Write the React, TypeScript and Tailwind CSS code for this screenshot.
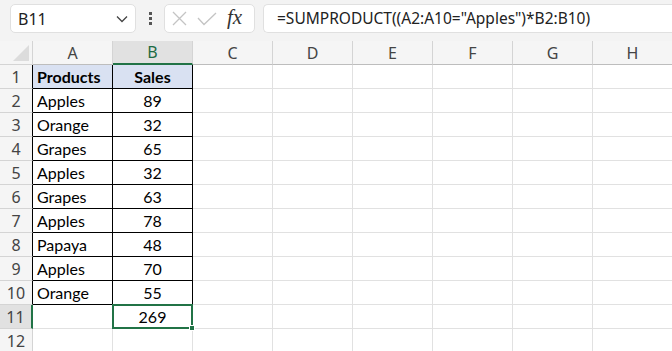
import React from 'react';

const cols = ['A', 'B', 'C', 'D', 'E', 'F', 'G', 'H'];

const data: [string, string][] = [
  ['Products', 'Sales'],
  ['Apples', '89'],
  ['Orange', '32'],
  ['Grapes', '65'],
  ['Apples', '32'],
  ['Grapes', '63'],
  ['Apples', '78'],
  ['Papaya', '48'],
  ['Apples', '70'],
  ['Orange', '55'],
];

const cellFont = { fontFamily: 'Lato, "Liberation Sans", sans-serif' };
const uiFont = { fontFamily: '"Noto Sans", "Open Sans", sans-serif' };

const App = () => {
  const rows = Array.from({ length: 12 }, (_, i) => i + 1);

  return (
    <div className="w-[672px] h-[351px] overflow-hidden bg-white" style={uiFont}>
      {/* formula bar */}
      <div className="h-[41px] bg-[#f3f3f3] flex items-start pt-[4px] pl-[10px] gap-[8px]">
        <div className="w-[126px] h-[29px] bg-white border border-[#e0e0e0] rounded-[5px] flex items-center justify-between pl-[7px] pr-[7px]">
          <span className="text-[16px] text-[#222]">B11</span>
          <svg width="12" height="8" viewBox="0 0 12 8" fill="none">
            <path d="M1 1.5 L6 6.5 L11 1.5" stroke="#444" strokeWidth="1.3" />
          </svg>
        </div>
        <div className="w-[12px] h-[29px] flex flex-col items-center justify-center gap-[2px]">
          <div className="w-[3px] h-[3px] bg-[#555]" />
          <div className="w-[3px] h-[3px] bg-[#555]" />
          <div className="w-[3px] h-[3px] bg-[#555]" />
        </div>
        <div className="w-[91px] h-[29px] bg-white border border-[#e0e0e0] rounded-[5px] flex items-center pl-[7px] gap-[10px]">
          <svg width="15" height="15" viewBox="0 0 15 15">
            <path d="M1 1 L14 14 M14 1 L1 14" stroke="#c4c4c4" strokeWidth="1.3" />
          </svg>
          <svg width="20" height="14" viewBox="0 0 20 14">
            <path d="M1 6 L7 12.5 L19 1" stroke="#c4c4c4" strokeWidth="1.3" fill="none" />
          </svg>
          <span className="text-[21px] italic text-[#333] leading-none -mt-[2px]" style={{ fontFamily: '"Liberation Serif", serif' }}>
            fx
          </span>
        </div>
        <div className="flex-1 h-[29px] bg-white border border-[#e0e0e0] rounded-l-[5px] border-r-0 flex items-center pl-[13px]">
          <span className="text-[15.5px] text-[#222] whitespace-nowrap">=SUMPRODUCT((A2:A10="Apples")*B2:B10)</span>
        </div>
      </div>

      {/* grid */}
      <div className="grid grid-cols-[33px_repeat(8,80px)] auto-rows-[24px]">
        {/* corner */}
        <div className="bg-[#f5f5f5] border-r border-b border-[#d4d4d4] flex items-end justify-end p-[3px]">
          <svg width="16" height="16" viewBox="0 0 16 16">
            <path d="M16 0 L16 16 L0 16 Z" fill="#dcdcdc" />
          </svg>
        </div>
        {cols.map((c) =>
          c === 'B' ? (
            <div
              key={c}
              className="bg-[#e1e1e1] border-r border-[#d4d4d4] border-b-2 border-b-[#217346] flex items-center justify-center text-[16px] text-[#1d6b44]"
            >
              {c}
            </div>
          ) : (
            <div
              key={c}
              className="bg-[#f5f5f5] border-r border-b border-[#d4d4d4] border-b-[#bdbdbd] flex items-center justify-center text-[16px] text-[#444]"
            >
              {c}
            </div>
          )
        )}

        {rows.map((r) => {
          const inTable = r <= 10;
          const selectedRow = r === 11;
          return (
            <React.Fragment key={r}>
              <div
                className={
                  selectedRow
                    ? 'bg-[#e1e1e1] border-r-2 border-r-[#217346] border-b border-b-[#d4d4d4] flex items-center justify-center text-[16px] text-[#444]'
                    : inTable
                    ? 'bg-[#f5f5f5] border-r border-r-black border-b border-b-[#d4d4d4] flex items-center justify-center text-[16px] text-[#444]'
                    : 'bg-[#f5f5f5] border-r border-r-[#d4d4d4] border-b border-b-[#d4d4d4] flex items-center justify-center text-[16px] text-[#444]'
                }
              >
                {r}
              </div>
              {cols.map((c, ci) => {
                if (inTable && ci < 2) {
                  const v = data[r - 1][ci];
                  return (
                    <div
                      key={c}
                      className={
                        (r === 1 ? 'bg-[#d9e1f2] font-bold ' : '') +
                        'border-r border-b border-black flex items-center text-[16px] text-black ' +
                        (ci === 0 ? 'pl-[4px]' : 'justify-center')
                      }
                      style={cellFont}
                    >
                      {v}
                    </div>
                  );
                }
                if (r === 11 && ci === 1) {
                  return (
                    <div
                      key={c}
                      className="relative border-r border-b border-[#e1e1e1] flex items-center justify-center text-[16px] text-black"
                      style={cellFont}
                    >
                      269
                      <div className="absolute -left-[1px] -top-[1px] -right-[1px] -bottom-[1px] border-2 border-[#217346]" />
                      <div className="absolute -right-[3px] -bottom-[3px] w-[6px] h-[6px] bg-[#217346] border border-white" />
                    </div>
                  );
                }
                return <div key={c} className="border-r border-b border-[#e1e1e1]" />;
              })}
            </React.Fragment>
          );
        })}
      </div>
    </div>
  );
};

export default App;
